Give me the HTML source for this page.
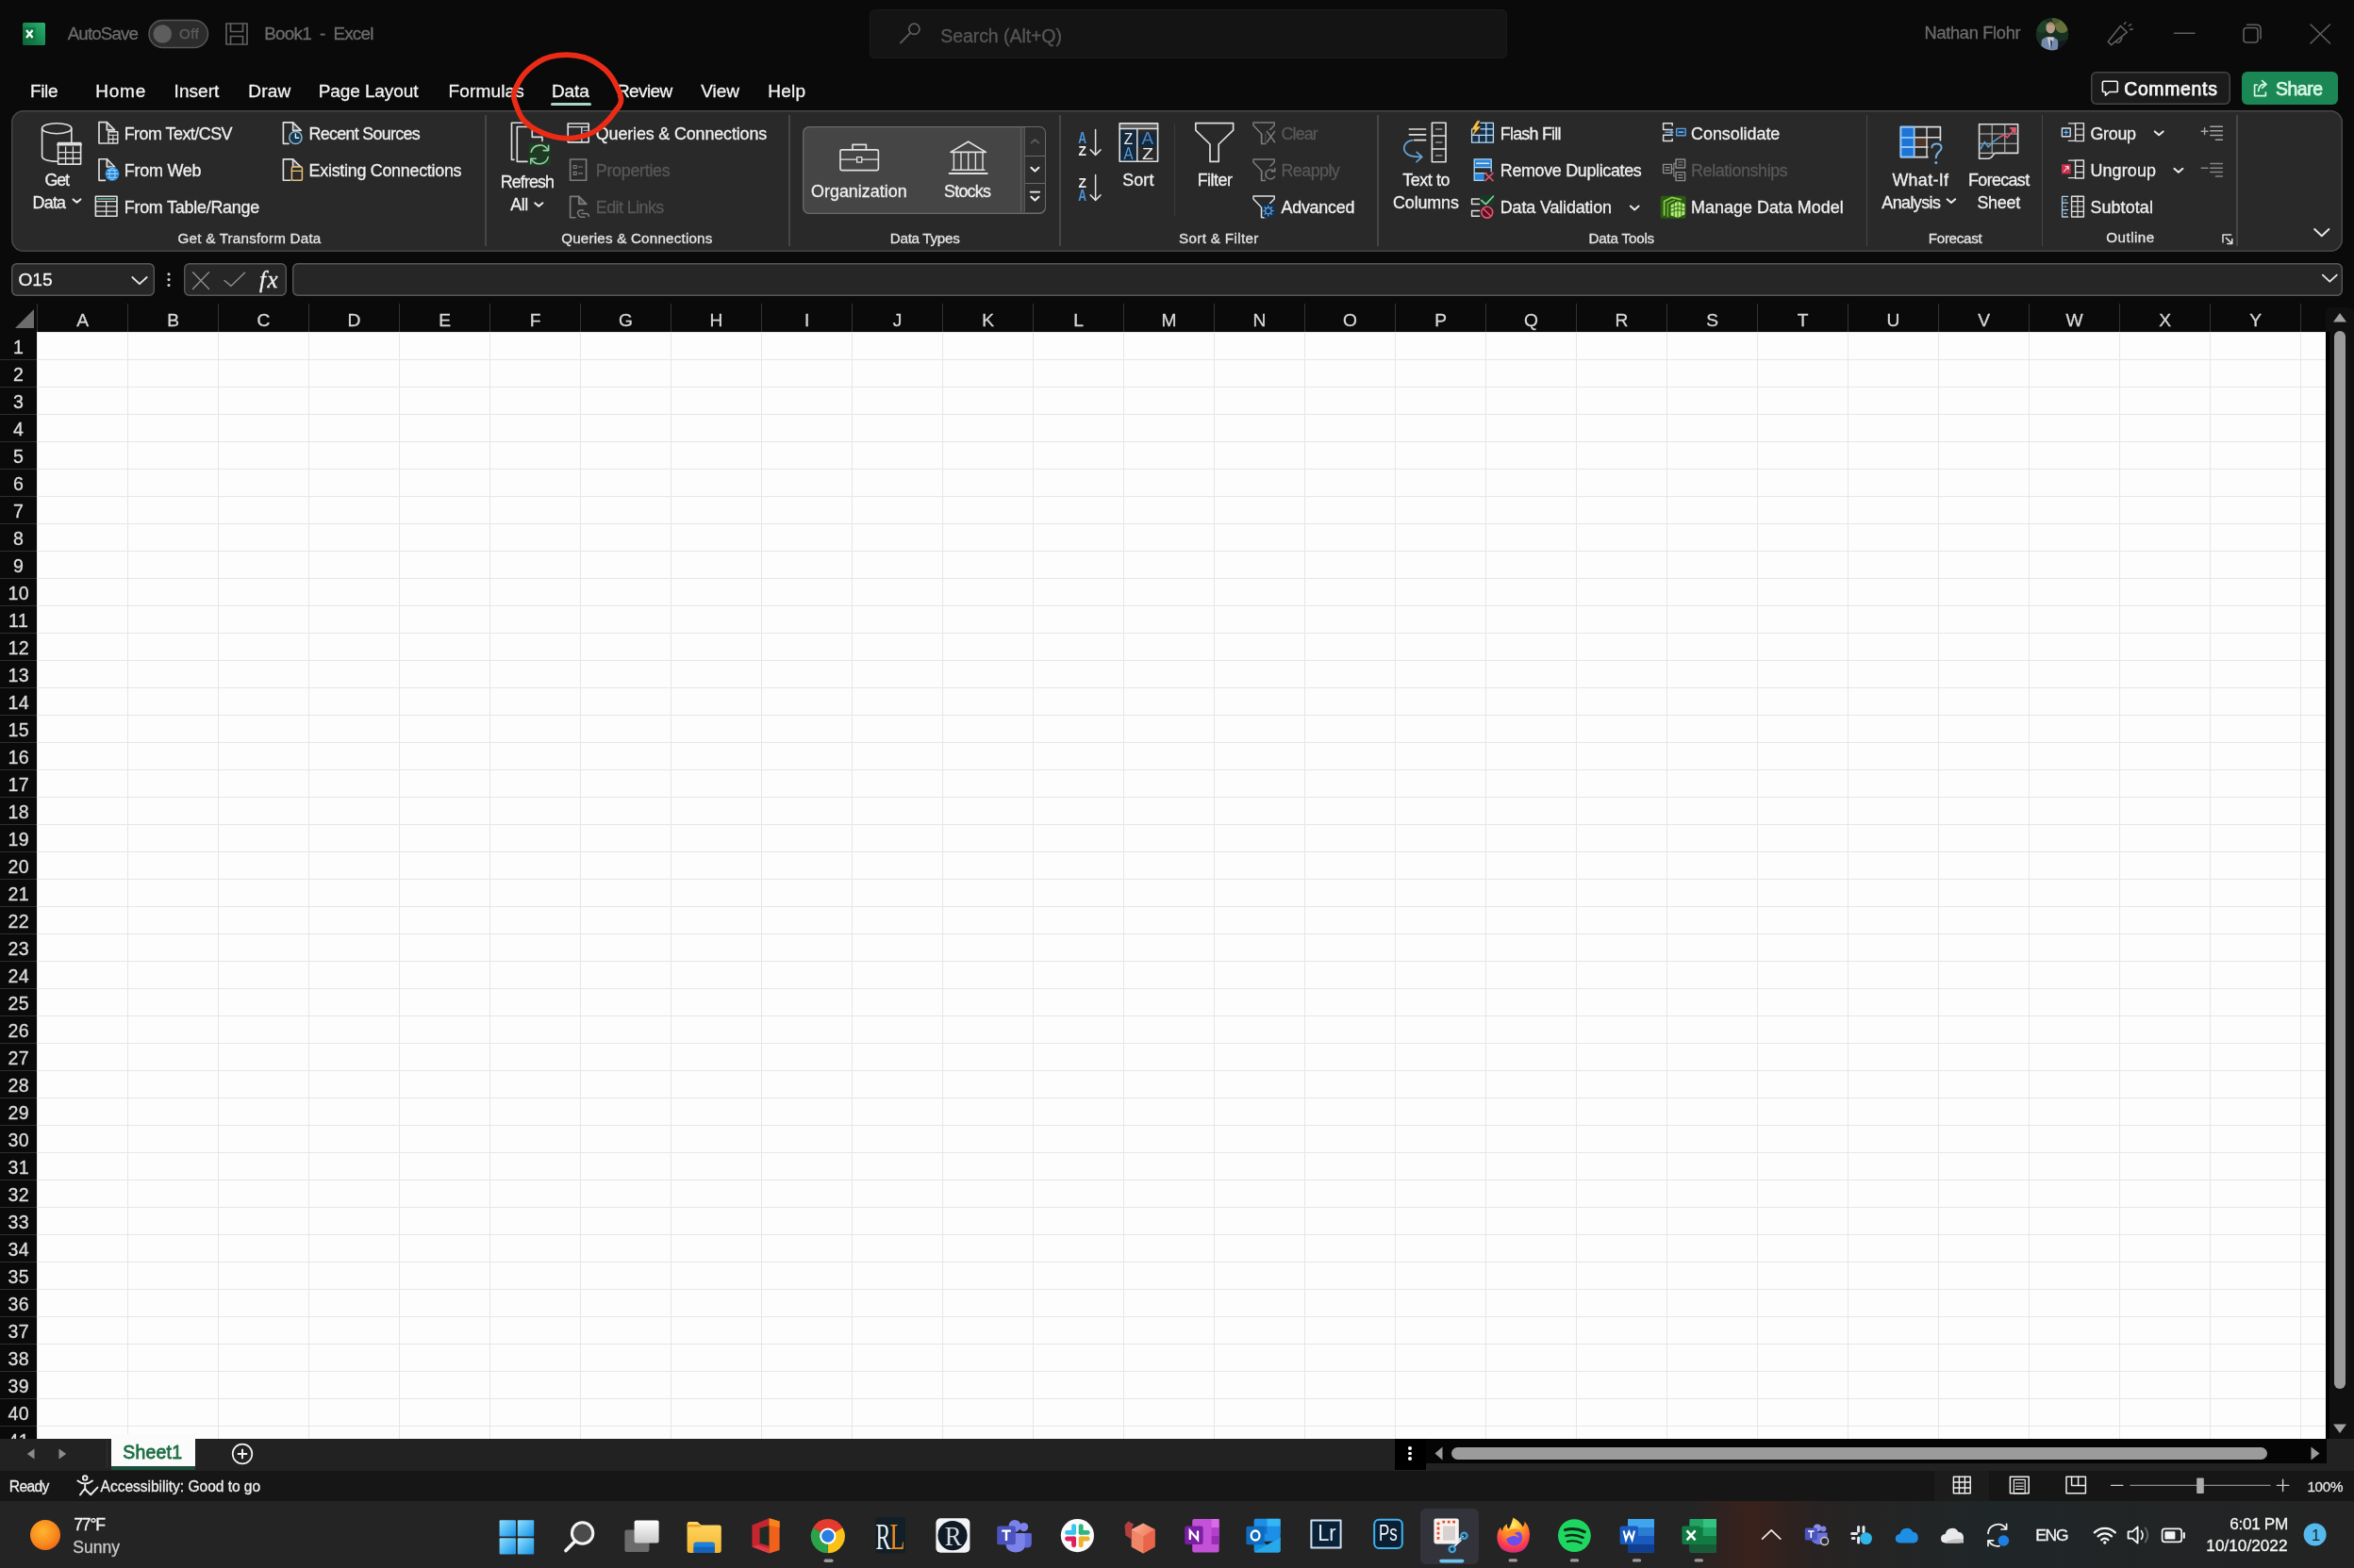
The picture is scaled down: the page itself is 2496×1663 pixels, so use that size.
<!DOCTYPE html><html lang="en"><head><meta charset="utf-8"><title>Book1 - Excel</title><style>html,body{margin:0;padding:0;background:#0a0a0a;}#r{position:relative;width:2496px;height:1663px;overflow:hidden;font-family:"Liberation Sans",sans-serif;will-change:transform;-webkit-font-smoothing:antialiased;}#r>div,#r>span,#r>svg{position:absolute;}#r>span{white-space:pre;line-height:1;-webkit-text-stroke:0.3px;}#r>svg{overflow:visible;}</style></head><body><div id="r">
<div style="left:0px;top:0px;width:2496px;height:352px;background:#0a0a0a;"></div>
<div style="left:922px;top:10px;width:676px;height:52px;background:#141414;border-radius:6px;box-shadow:inset 0 0 0 1px #1b1b1b;"></div>
<div style="left:12px;top:117px;width:2472px;height:150px;background:#292929;border-radius:13px;box-shadow:inset 0 0 0 1.5px #474747;"></div>
<div style="left:12px;top:279px;width:152px;height:35px;background:#262626;border-radius:6px;box-shadow:inset 0 0 0 1.4px #575757;"></div>
<div style="left:195px;top:279px;width:108.5px;height:35px;background:#262626;border-radius:6px;box-shadow:inset 0 0 0 1.4px #575757;"></div>
<div style="left:310px;top:279px;width:2174px;height:35px;background:#262626;border-radius:6px;box-shadow:inset 0 0 0 1.4px #575757;"></div>
<div style="left:39px;top:352px;width:2427px;height:1174px;background-color:#fdfdfd;background-image:linear-gradient(to right,transparent 95px,#e7e7e7 95px),linear-gradient(to bottom,transparent 28px,#e7e7e7 28px);background-size:96px 29px;background-position:1px 1px;"></div>
<div style="left:0px;top:352px;width:39px;height:1174px;background:#0a0a0a;"></div>
<div style="left:39px;top:322px;width:1px;height:30px;background:#333;"></div>
<div style="left:135px;top:322px;width:1px;height:30px;background:#333;"></div>
<div style="left:231px;top:322px;width:1px;height:30px;background:#333;"></div>
<div style="left:327px;top:322px;width:1px;height:30px;background:#333;"></div>
<div style="left:423px;top:322px;width:1px;height:30px;background:#333;"></div>
<div style="left:519px;top:322px;width:1px;height:30px;background:#333;"></div>
<div style="left:615px;top:322px;width:1px;height:30px;background:#333;"></div>
<div style="left:711px;top:322px;width:1px;height:30px;background:#333;"></div>
<div style="left:807px;top:322px;width:1px;height:30px;background:#333;"></div>
<div style="left:903px;top:322px;width:1px;height:30px;background:#333;"></div>
<div style="left:999px;top:322px;width:1px;height:30px;background:#333;"></div>
<div style="left:1095px;top:322px;width:1px;height:30px;background:#333;"></div>
<div style="left:1191px;top:322px;width:1px;height:30px;background:#333;"></div>
<div style="left:1287px;top:322px;width:1px;height:30px;background:#333;"></div>
<div style="left:1383px;top:322px;width:1px;height:30px;background:#333;"></div>
<div style="left:1479px;top:322px;width:1px;height:30px;background:#333;"></div>
<div style="left:1575px;top:322px;width:1px;height:30px;background:#333;"></div>
<div style="left:1671px;top:322px;width:1px;height:30px;background:#333;"></div>
<div style="left:1767px;top:322px;width:1px;height:30px;background:#333;"></div>
<div style="left:1863px;top:322px;width:1px;height:30px;background:#333;"></div>
<div style="left:1959px;top:322px;width:1px;height:30px;background:#333;"></div>
<div style="left:2055px;top:322px;width:1px;height:30px;background:#333;"></div>
<div style="left:2151px;top:322px;width:1px;height:30px;background:#333;"></div>
<div style="left:2247px;top:322px;width:1px;height:30px;background:#333;"></div>
<div style="left:2343px;top:322px;width:1px;height:30px;background:#333;"></div>
<div style="left:2439px;top:322px;width:1px;height:30px;background:#333;"></div>
<div style="left:0px;top:381px;width:39px;height:1px;background:#2e2e2e;"></div>
<div style="left:0px;top:410px;width:39px;height:1px;background:#2e2e2e;"></div>
<div style="left:0px;top:439px;width:39px;height:1px;background:#2e2e2e;"></div>
<div style="left:0px;top:468px;width:39px;height:1px;background:#2e2e2e;"></div>
<div style="left:0px;top:497px;width:39px;height:1px;background:#2e2e2e;"></div>
<div style="left:0px;top:526px;width:39px;height:1px;background:#2e2e2e;"></div>
<div style="left:0px;top:555px;width:39px;height:1px;background:#2e2e2e;"></div>
<div style="left:0px;top:584px;width:39px;height:1px;background:#2e2e2e;"></div>
<div style="left:0px;top:613px;width:39px;height:1px;background:#2e2e2e;"></div>
<div style="left:0px;top:642px;width:39px;height:1px;background:#2e2e2e;"></div>
<div style="left:0px;top:671px;width:39px;height:1px;background:#2e2e2e;"></div>
<div style="left:0px;top:700px;width:39px;height:1px;background:#2e2e2e;"></div>
<div style="left:0px;top:729px;width:39px;height:1px;background:#2e2e2e;"></div>
<div style="left:0px;top:758px;width:39px;height:1px;background:#2e2e2e;"></div>
<div style="left:0px;top:787px;width:39px;height:1px;background:#2e2e2e;"></div>
<div style="left:0px;top:816px;width:39px;height:1px;background:#2e2e2e;"></div>
<div style="left:0px;top:845px;width:39px;height:1px;background:#2e2e2e;"></div>
<div style="left:0px;top:874px;width:39px;height:1px;background:#2e2e2e;"></div>
<div style="left:0px;top:903px;width:39px;height:1px;background:#2e2e2e;"></div>
<div style="left:0px;top:932px;width:39px;height:1px;background:#2e2e2e;"></div>
<div style="left:0px;top:961px;width:39px;height:1px;background:#2e2e2e;"></div>
<div style="left:0px;top:990px;width:39px;height:1px;background:#2e2e2e;"></div>
<div style="left:0px;top:1019px;width:39px;height:1px;background:#2e2e2e;"></div>
<div style="left:0px;top:1048px;width:39px;height:1px;background:#2e2e2e;"></div>
<div style="left:0px;top:1077px;width:39px;height:1px;background:#2e2e2e;"></div>
<div style="left:0px;top:1106px;width:39px;height:1px;background:#2e2e2e;"></div>
<div style="left:0px;top:1135px;width:39px;height:1px;background:#2e2e2e;"></div>
<div style="left:0px;top:1164px;width:39px;height:1px;background:#2e2e2e;"></div>
<div style="left:0px;top:1193px;width:39px;height:1px;background:#2e2e2e;"></div>
<div style="left:0px;top:1222px;width:39px;height:1px;background:#2e2e2e;"></div>
<div style="left:0px;top:1251px;width:39px;height:1px;background:#2e2e2e;"></div>
<div style="left:0px;top:1280px;width:39px;height:1px;background:#2e2e2e;"></div>
<div style="left:0px;top:1309px;width:39px;height:1px;background:#2e2e2e;"></div>
<div style="left:0px;top:1338px;width:39px;height:1px;background:#2e2e2e;"></div>
<div style="left:0px;top:1367px;width:39px;height:1px;background:#2e2e2e;"></div>
<div style="left:0px;top:1396px;width:39px;height:1px;background:#2e2e2e;"></div>
<div style="left:0px;top:1425px;width:39px;height:1px;background:#2e2e2e;"></div>
<div style="left:0px;top:1454px;width:39px;height:1px;background:#2e2e2e;"></div>
<div style="left:0px;top:1483px;width:39px;height:1px;background:#2e2e2e;"></div>
<div style="left:0px;top:1512px;width:39px;height:1px;background:#2e2e2e;"></div>
<svg style="left:15px;top:327px;" width="22" height="22" viewBox="0 0 22 22"><path d="M21 1V21H1Z" fill="#6d6d6d"/></svg>
<span style="left:81.2px;top:329.6px;font-size:19.2px;color:#d8d8d8;">A</span>
<span style="left:177.2px;top:329.6px;font-size:19.2px;color:#d8d8d8;">B</span>
<span style="left:272.6px;top:329.6px;font-size:19.2px;color:#d8d8d8;">C</span>
<span style="left:368.6px;top:329.6px;font-size:19.2px;color:#d8d8d8;">D</span>
<span style="left:465.2px;top:329.6px;font-size:19.2px;color:#d8d8d8;">E</span>
<span style="left:561.7px;top:329.6px;font-size:19.2px;color:#d8d8d8;">F</span>
<span style="left:656.1px;top:329.6px;font-size:19.2px;color:#d8d8d8;">G</span>
<span style="left:752.6px;top:329.6px;font-size:19.2px;color:#d8d8d8;">H</span>
<span style="left:852.9px;top:329.6px;font-size:19.2px;color:#d8d8d8;">I</span>
<span style="left:946.8px;top:329.6px;font-size:19.2px;color:#d8d8d8;">J</span>
<span style="left:1041.2px;top:329.6px;font-size:19.2px;color:#d8d8d8;">K</span>
<span style="left:1138.2px;top:329.6px;font-size:19.2px;color:#d8d8d8;">L</span>
<span style="left:1231.6px;top:329.6px;font-size:19.2px;color:#d8d8d8;">M</span>
<span style="left:1328.6px;top:329.6px;font-size:19.2px;color:#d8d8d8;">N</span>
<span style="left:1424.1px;top:329.6px;font-size:19.2px;color:#d8d8d8;">O</span>
<span style="left:1521.2px;top:329.6px;font-size:19.2px;color:#d8d8d8;">P</span>
<span style="left:1616.1px;top:329.6px;font-size:19.2px;color:#d8d8d8;">Q</span>
<span style="left:1712.6px;top:329.6px;font-size:19.2px;color:#d8d8d8;">R</span>
<span style="left:1809.2px;top:329.6px;font-size:19.2px;color:#d8d8d8;">S</span>
<span style="left:1905.7px;top:329.6px;font-size:19.2px;color:#d8d8d8;">T</span>
<span style="left:2000.6px;top:329.6px;font-size:19.2px;color:#d8d8d8;">U</span>
<span style="left:2097.2px;top:329.6px;font-size:19.2px;color:#d8d8d8;">V</span>
<span style="left:2190.5px;top:329.6px;font-size:19.2px;color:#d8d8d8;">W</span>
<span style="left:2289.2px;top:329.6px;font-size:19.2px;color:#d8d8d8;">X</span>
<span style="left:2385.2px;top:329.6px;font-size:19.2px;color:#d8d8d8;">Y</span>
<span style="left:14.1px;top:359.0px;font-size:19.6px;color:#dedede;">1</span>
<span style="left:14.1px;top:388.0px;font-size:19.6px;color:#dedede;">2</span>
<span style="left:14.1px;top:417.0px;font-size:19.6px;color:#dedede;">3</span>
<span style="left:14.1px;top:446.0px;font-size:19.6px;color:#dedede;">4</span>
<span style="left:14.1px;top:475.0px;font-size:19.6px;color:#dedede;">5</span>
<span style="left:14.1px;top:504.0px;font-size:19.6px;color:#dedede;">6</span>
<span style="left:14.1px;top:533.0px;font-size:19.6px;color:#dedede;">7</span>
<span style="left:14.1px;top:562.0px;font-size:19.6px;color:#dedede;">8</span>
<span style="left:14.1px;top:591.0px;font-size:19.6px;color:#dedede;">9</span>
<span style="left:8.4px;top:620.0px;font-size:19.6px;color:#dedede;letter-spacing:0.50px;">10</span>
<span style="left:9.1px;top:649.0px;font-size:19.6px;color:#dedede;letter-spacing:0.50px;">11</span>
<span style="left:8.4px;top:678.0px;font-size:19.6px;color:#dedede;letter-spacing:0.50px;">12</span>
<span style="left:8.4px;top:707.0px;font-size:19.6px;color:#dedede;letter-spacing:0.50px;">13</span>
<span style="left:8.4px;top:736.0px;font-size:19.6px;color:#dedede;letter-spacing:0.50px;">14</span>
<span style="left:8.4px;top:765.0px;font-size:19.6px;color:#dedede;letter-spacing:0.50px;">15</span>
<span style="left:8.4px;top:794.0px;font-size:19.6px;color:#dedede;letter-spacing:0.50px;">16</span>
<span style="left:8.4px;top:823.0px;font-size:19.6px;color:#dedede;letter-spacing:0.50px;">17</span>
<span style="left:8.4px;top:852.0px;font-size:19.6px;color:#dedede;letter-spacing:0.50px;">18</span>
<span style="left:8.4px;top:881.0px;font-size:19.6px;color:#dedede;letter-spacing:0.50px;">19</span>
<span style="left:8.4px;top:910.0px;font-size:19.6px;color:#dedede;letter-spacing:0.50px;">20</span>
<span style="left:8.4px;top:939.0px;font-size:19.6px;color:#dedede;letter-spacing:0.50px;">21</span>
<span style="left:8.4px;top:968.0px;font-size:19.6px;color:#dedede;letter-spacing:0.50px;">22</span>
<span style="left:8.4px;top:997.0px;font-size:19.6px;color:#dedede;letter-spacing:0.50px;">23</span>
<span style="left:8.4px;top:1026.0px;font-size:19.6px;color:#dedede;letter-spacing:0.50px;">24</span>
<span style="left:8.4px;top:1055.0px;font-size:19.6px;color:#dedede;letter-spacing:0.50px;">25</span>
<span style="left:8.4px;top:1084.0px;font-size:19.6px;color:#dedede;letter-spacing:0.50px;">26</span>
<span style="left:8.4px;top:1113.0px;font-size:19.6px;color:#dedede;letter-spacing:0.50px;">27</span>
<span style="left:8.4px;top:1142.0px;font-size:19.6px;color:#dedede;letter-spacing:0.50px;">28</span>
<span style="left:8.4px;top:1171.0px;font-size:19.6px;color:#dedede;letter-spacing:0.50px;">29</span>
<span style="left:8.4px;top:1200.0px;font-size:19.6px;color:#dedede;letter-spacing:0.50px;">30</span>
<span style="left:8.4px;top:1229.0px;font-size:19.6px;color:#dedede;letter-spacing:0.50px;">31</span>
<span style="left:8.4px;top:1258.0px;font-size:19.6px;color:#dedede;letter-spacing:0.50px;">32</span>
<span style="left:8.4px;top:1287.0px;font-size:19.6px;color:#dedede;letter-spacing:0.50px;">33</span>
<span style="left:8.4px;top:1316.0px;font-size:19.6px;color:#dedede;letter-spacing:0.50px;">34</span>
<span style="left:8.4px;top:1345.0px;font-size:19.6px;color:#dedede;letter-spacing:0.50px;">35</span>
<span style="left:8.4px;top:1374.0px;font-size:19.6px;color:#dedede;letter-spacing:0.50px;">36</span>
<span style="left:8.4px;top:1403.0px;font-size:19.6px;color:#dedede;letter-spacing:0.50px;">37</span>
<span style="left:8.4px;top:1432.0px;font-size:19.6px;color:#dedede;letter-spacing:0.50px;">38</span>
<span style="left:8.4px;top:1461.0px;font-size:19.6px;color:#dedede;letter-spacing:0.50px;">39</span>
<span style="left:8.4px;top:1490.0px;font-size:19.6px;color:#dedede;letter-spacing:0.50px;">40</span>
<span style="left:8.4px;top:1519.0px;font-size:19.6px;color:#dedede;letter-spacing:0.50px;">41</span>
<div style="left:2466px;top:326px;width:30px;height:1201px;background:#101010;border-radius:6px 6px 0 8px;"></div>
<div style="left:2466px;top:352px;width:4px;height:1174px;background:#000;"></div>
<div style="left:2475px;top:351px;width:12px;height:1122px;background:#9b9b9b;border-radius:6px;"></div>
<svg style="left:2473px;top:1509px;" width="16" height="12" viewBox="0 0 16 12"><path d="M1 1.5H15L8 11Z" fill="#a0a0a0"/></svg>
<svg style="left:2473px;top:331px;" width="16" height="12" viewBox="0 0 16 12"><path d="M1 10.5H15L8 1Z" fill="#a0a0a0"/></svg>
<div style="left:0px;top:1526px;width:2496px;height:34px;background:#222;"></div>
<div style="left:2466px;top:1527px;width:30px;height:33px;background:#222;"></div>
<div style="left:1479px;top:1526px;width:988px;height:26px;background:#050505;"></div>
<div style="left:1479px;top:1526px;width:33px;height:33px;background:#000;"></div>
<div style="left:1539px;top:1535px;width:865px;height:13px;background:#9b9b9b;border-radius:6.5px;"></div>
<svg style="left:1521px;top:1534px;" width="9" height="15" viewBox="0 0 9 15"><path d="M8.5 0.5V14.5L0.5 7.5Z" fill="#9b9b9b"/></svg>
<svg style="left:2450px;top:1534px;" width="10" height="15" viewBox="0 0 10 15"><path d="M0.5 0.5V14.5L9.5 7.5Z" fill="#9b9b9b"/></svg>
<div style="left:1493.4px;top:1533.8px;width:3.8px;height:3.8px;background:#fff;border-radius:50%;"></div>
<div style="left:1493.4px;top:1539.5px;width:3.8px;height:3.8px;background:#fff;border-radius:50%;"></div>
<div style="left:1493.4px;top:1545.3px;width:3.8px;height:3.8px;background:#fff;border-radius:50%;"></div>
<div style="left:113px;top:1528px;width:1px;height:29px;background:#333;"></div>
<div style="left:118px;top:1521px;width:89px;height:34px;background:#fbfbfb;"></div>
<div style="left:118px;top:1555px;width:89px;height:3.5px;background:#1c4f39;"></div>
<span style="left:130.2px;top:1530.8px;font-size:19.4px;color:#1e7044;letter-spacing:0.26px;-webkit-text-stroke:0.8px #1e7044;">Sheet1</span>
<svg style="left:28px;top:1536px;" width="9" height="12" viewBox="0 0 9 12"><path d="M8.5 0.5V11.5L0.8 6Z" fill="#8c8c8c"/></svg>
<svg style="left:61.5px;top:1536px;" width="9" height="12" viewBox="0 0 9 12"><path d="M0.5 0.5V11.5L8.2 6Z" fill="#8c8c8c"/></svg>
<svg style="left:245px;top:1530px;" width="24" height="24" viewBox="0 0 24 24"><circle cx="12" cy="12" r="10.3" fill="none" stroke="#f2f2f2" stroke-width="1.7"/><path d="M12 6.8V17.2M6.8 12H17.2" stroke="#f2f2f2" stroke-width="2" fill="none"/></svg>
<div style="left:0px;top:1559.5px;width:2496px;height:32.5px;background:#161616;"></div>
<div style="left:2051px;top:1559.5px;width:58px;height:32.5px;background:#1c1c1c;"></div>
<span style="left:9.8px;top:1569.4px;font-size:15.6px;color:#efefef;letter-spacing:-0.65px;">Ready</span>
<span style="left:106.6px;top:1569.4px;font-size:15.6px;color:#efefef;letter-spacing:-0.05px;">Accessibility: Good to go</span>
<span style="left:2446.4px;top:1568.9px;font-size:15.2px;color:#e6e6e6;letter-spacing:-0.26px;">100%</span>
<div style="left:0;top:1592px;width:2496px;height:71px;background:linear-gradient(to right,#242424 0,#242424 1795px,#3a211b 1855px,#272322 1925px,#1f2628 2110px,#222425 2300px,#232323 2496px);"></div>
<div style="left:1506px;top:1600px;width:62px;height:59px;background:#33343b;border-radius:6px;"></div>
<span style="left:78.2px;top:1608.7px;font-size:17.6px;color:#f4f4f4;letter-spacing:-1.15px;">77°F</span>
<span style="left:77.3px;top:1632.5px;font-size:17.6px;color:#c9c9c9;letter-spacing:-0.03px;">Sunny</span>
<span style="left:2158.2px;top:1620.0px;font-size:17.4px;color:#f4f4f4;letter-spacing:-1.20px;">ENG</span>
<span style="left:2364.2px;top:1607.9px;font-size:17.2px;color:#f4f4f4;letter-spacing:-0.31px;">6:01 PM</span>
<span style="left:2339.3px;top:1631.4px;font-size:17.2px;color:#f4f4f4;letter-spacing:0.02px;">10/10/2022</span>
<span style="left:71.7px;top:26.7px;font-size:18.8px;color:#6c6c6c;letter-spacing:-0.89px;">AutoSave</span>
<span style="left:280.3px;top:26.7px;font-size:18.8px;color:#6c6c6c;letter-spacing:-0.73px;">Book1  -  Excel</span>
<span style="left:997.2px;top:28.8px;font-size:19.6px;color:#565656;letter-spacing:-0.10px;">Search (Alt+Q)</span>
<span style="left:2040.6px;top:26.0px;font-size:18.2px;color:#6c6c6c;letter-spacing:-0.29px;">Nathan Flohr</span>
<span style="left:32.0px;top:87.4px;font-size:19.0px;color:#f3f3f3;letter-spacing:-0.37px;">File</span>
<span style="left:101.2px;top:87.4px;font-size:19.0px;color:#f3f3f3;letter-spacing:0.81px;">Home</span>
<span style="left:184.6px;top:87.4px;font-size:19.0px;color:#f3f3f3;letter-spacing:0.04px;">Insert</span>
<span style="left:263.2px;top:87.4px;font-size:19.0px;color:#f3f3f3;letter-spacing:0.25px;">Draw</span>
<span style="left:337.7px;top:87.4px;font-size:19.0px;color:#f3f3f3;letter-spacing:-0.09px;">Page Layout</span>
<span style="left:475.6px;top:87.4px;font-size:19.0px;color:#f3f3f3;letter-spacing:0.13px;">Formulas</span>
<span style="left:584.9px;top:87.4px;font-size:19.0px;color:#f3f3f3;letter-spacing:-0.04px;">Data</span>
<span style="left:654.0px;top:87.4px;font-size:19.0px;color:#f3f3f3;letter-spacing:-0.60px;">Review</span>
<span style="left:743.2px;top:87.4px;font-size:19.0px;color:#f3f3f3;letter-spacing:-0.01px;">View</span>
<span style="left:814.2px;top:87.4px;font-size:19.0px;color:#f3f3f3;letter-spacing:0.24px;">Help</span>
<div style="left:584px;top:108.5px;width:42.5px;height:3.5px;background:#a7d5c6;border-radius:1.5px;"></div>
<div style="left:2216.5px;top:76px;width:148.5px;height:35px;background:#1b1b1b;border-radius:6px;box-shadow:inset 0 0 0 1.5px #454545;"></div>
<div style="left:2377px;top:76px;width:101.5px;height:35px;background:#1b8755;border-radius:6px;"></div>
<span style="left:2252.2px;top:85.2px;font-size:19.4px;color:#f6f6f6;letter-spacing:0.70px;-webkit-text-stroke:0.75px #f6f6f6;">Comments</span>
<span style="left:2413.0px;top:85.2px;font-size:19.4px;color:#d6f6e4;letter-spacing:-0.44px;-webkit-text-stroke:0.75px #d6f6e4;">Share</span>
<div style="left:514.2px;top:122px;width:1.6px;height:139px;background:#464646;"></div>
<div style="left:836.2px;top:122px;width:1.6px;height:139px;background:#464646;"></div>
<div style="left:1123.2px;top:122px;width:1.6px;height:139px;background:#464646;"></div>
<div style="left:1460.2px;top:122px;width:1.6px;height:139px;background:#464646;"></div>
<div style="left:1978.9px;top:122px;width:1.6px;height:139px;background:#464646;"></div>
<div style="left:2164.8999999999996px;top:122px;width:1.6px;height:139px;background:#464646;"></div>
<div style="left:2371.2px;top:122px;width:1.6px;height:139px;background:#464646;"></div>
<div style="left:1244.5px;top:131px;width:1px;height:98px;background:#3a3a3a;"></div>
<div style="left:851px;top:134px;width:258px;height:92.5px;background:#454545;border-radius:7px;box-shadow:inset 0 0 0 1.3px #6a6a6a;"></div>
<div style="left:1087px;top:135.3px;width:20.7px;height:90px;background:#2d2d2d;border-radius:0 6px 6px 0;"></div>
<div style="left:1082px;top:135.3px;width:1.2px;height:90px;background:#606060;"></div>
<div style="left:1086px;top:135.3px;width:1px;height:90px;background:#5a5a5a;"></div>
<div style="left:1087px;top:165px;width:21px;height:1.3px;background:#6a6a6a;"></div>
<div style="left:1087px;top:194px;width:21px;height:1.3px;background:#6a6a6a;"></div>
<span style="left:47.6px;top:182.6px;font-size:17.9px;color:#f0f0f0;letter-spacing:-1.20px;">Get</span>
<span style="left:34.5px;top:206.5px;font-size:17.9px;color:#f0f0f0;letter-spacing:-0.74px;">Data</span>
<span style="left:131.7px;top:133.8px;font-size:17.9px;color:#f0f0f0;letter-spacing:-0.51px;">From Text/CSV</span>
<span style="left:131.7px;top:172.8px;font-size:17.9px;color:#f0f0f0;letter-spacing:-0.20px;">From Web</span>
<span style="left:131.7px;top:211.8px;font-size:17.9px;color:#f0f0f0;letter-spacing:-0.22px;">From Table/Range</span>
<span style="left:327.6px;top:133.8px;font-size:17.9px;color:#f0f0f0;letter-spacing:-0.71px;">Recent Sources</span>
<span style="left:327.6px;top:172.8px;font-size:17.9px;color:#f0f0f0;letter-spacing:-0.27px;">Existing Connections</span>
<span style="left:530.8px;top:185.1px;font-size:17.9px;color:#f0f0f0;letter-spacing:-0.91px;">Refresh</span>
<span style="left:541.3px;top:209.2px;font-size:17.9px;color:#f0f0f0;letter-spacing:-0.45px;">All</span>
<span style="left:631.8px;top:133.8px;font-size:17.9px;color:#f0f0f0;letter-spacing:-0.13px;">Queries &amp; Connections</span>
<span style="left:631.8px;top:172.8px;font-size:17.9px;color:#585858;letter-spacing:-0.29px;">Properties</span>
<span style="left:631.8px;top:211.8px;font-size:17.9px;color:#585858;letter-spacing:-0.57px;">Edit Links</span>
<span style="left:860.0px;top:195.2px;font-size:17.9px;color:#f0f0f0;letter-spacing:0.02px;">Organization</span>
<span style="left:1001.1px;top:195.2px;font-size:17.9px;color:#f0f0f0;letter-spacing:-0.78px;">Stocks</span>
<span style="left:1190.2px;top:182.8px;font-size:17.9px;color:#f0f0f0;letter-spacing:0.12px;">Sort</span>
<span style="left:1269.7px;top:182.8px;font-size:17.9px;color:#f0f0f0;letter-spacing:-0.51px;">Filter</span>
<span style="left:1358.5px;top:133.8px;font-size:17.9px;color:#585858;letter-spacing:-0.87px;">Clear</span>
<span style="left:1358.5px;top:172.8px;font-size:17.9px;color:#585858;letter-spacing:-0.56px;">Reapply</span>
<span style="left:1358.5px;top:211.8px;font-size:17.9px;color:#f0f0f0;letter-spacing:-0.24px;">Advanced</span>
<span style="left:1487.2px;top:182.8px;font-size:17.9px;color:#f0f0f0;letter-spacing:-0.40px;">Text to</span>
<span style="left:1477.0px;top:206.6px;font-size:17.9px;color:#f0f0f0;letter-spacing:-0.12px;">Columns</span>
<span style="left:1590.8px;top:133.8px;font-size:17.9px;color:#f0f0f0;letter-spacing:-0.76px;">Flash Fill</span>
<span style="left:1590.8px;top:172.8px;font-size:17.9px;color:#f0f0f0;letter-spacing:-0.32px;">Remove Duplicates</span>
<span style="left:1590.8px;top:211.8px;font-size:17.9px;color:#f0f0f0;letter-spacing:-0.13px;">Data Validation</span>
<span style="left:1793.1px;top:133.8px;font-size:17.9px;color:#f0f0f0;letter-spacing:-0.03px;">Consolidate</span>
<span style="left:1793.1px;top:172.8px;font-size:17.9px;color:#585858;letter-spacing:-0.40px;">Relationships</span>
<span style="left:1793.1px;top:211.8px;font-size:17.9px;color:#f0f0f0;letter-spacing:0.03px;">Manage Data Model</span>
<span style="left:2006.4px;top:182.8px;font-size:17.9px;color:#f0f0f0;letter-spacing:0.32px;">What-If</span>
<span style="left:1995.3px;top:206.6px;font-size:17.9px;color:#f0f0f0;letter-spacing:-0.58px;">Analysis</span>
<span style="left:2087.1px;top:182.8px;font-size:17.9px;color:#f0f0f0;letter-spacing:-0.65px;">Forecast</span>
<span style="left:2096.4px;top:206.6px;font-size:17.9px;color:#f0f0f0;letter-spacing:-0.24px;">Sheet</span>
<span style="left:2216.4px;top:133.8px;font-size:17.9px;color:#f0f0f0;letter-spacing:-0.26px;">Group</span>
<span style="left:2216.4px;top:172.8px;font-size:17.9px;color:#f0f0f0;letter-spacing:0.16px;">Ungroup</span>
<span style="left:2216.4px;top:211.8px;font-size:17.9px;color:#f0f0f0;letter-spacing:0.12px;">Subtotal</span>
<span style="left:188.6px;top:244.5px;font-size:15.2px;color:#e4e4e4;letter-spacing:0.21px;">Get &amp; Transform Data</span>
<span style="left:595.2px;top:244.5px;font-size:15.2px;color:#e4e4e4;letter-spacing:0.20px;">Queries &amp; Connections</span>
<span style="left:943.8px;top:244.5px;font-size:15.2px;color:#e4e4e4;letter-spacing:-0.29px;">Data Types</span>
<span style="left:1250.0px;top:244.5px;font-size:15.2px;color:#e4e4e4;letter-spacing:0.35px;">Sort &amp; Filter</span>
<span style="left:1684.5px;top:244.5px;font-size:15.2px;color:#e4e4e4;letter-spacing:-0.20px;">Data Tools</span>
<span style="left:2044.8px;top:244.5px;font-size:15.2px;color:#e4e4e4;letter-spacing:-0.32px;">Forecast</span>
<span style="left:2233.3px;top:243.6px;font-size:15.2px;color:#e4e4e4;letter-spacing:0.47px;">Outline</span>
<span style="left:19.5px;top:287.1px;font-size:19.2px;color:#f4f4f4;letter-spacing:-0.09px;">O15</span>
<span style="left:275.0px;top:283.6px;font-size:25px;color:#f0f0f0;letter-spacing:1.50px;font-style:italic;font-family:'Liberation Serif',serif;">fx</span>
<svg style="left:0;top:0px" width="2496" height="117" viewBox="0 0 2496 117" fill="none" stroke-linecap="round" stroke-linejoin="round"><defs><linearGradient id="xg" x1="0" y1="1" x2="1" y2="0"><stop offset="0" stop-color="#0d6234"/><stop offset="0.5" stop-color="#188a50"/><stop offset="1" stop-color="#2fb374"/></linearGradient></defs><rect x="24" y="24" width="24" height="24" rx="1.5" fill="url(#xg)"/><rect x="24" y="29" width="13.5" height="14" fill="#0f6d3b" opacity=".75"/><path d="M28 32L34.6 40M34.6 32L28 40" stroke="#f1fff6" stroke-width="2.3" stroke-linecap="butt"/><rect x="158" y="21.5" width="62.5" height="29" rx="14.5" fill="#2c2c2c" stroke="#565656" stroke-width="1.5"/><circle cx="172.3" cy="36" r="9.8" fill="#5d5d5d"/><g stroke="#5f5f5f" stroke-width="1.7" stroke-linejoin="miter"><path d="M240 25H262V47H240Z"/><path d="M244.5 25V33.5H257.5V25"/><path d="M244.5 47V38.5H257.5V47"/></g><circle cx="969.4" cy="30.8" r="5.6" stroke="#5e5e5e" stroke-width="1.7"/><path d="M965.3 34.9L954.8 45.6" stroke="#5e5e5e" stroke-width="1.9"/><defs><clipPath id="av"><circle cx="2176" cy="36.2" r="17.2"/></clipPath></defs><g clip-path="url(#av)" opacity=".82"><rect x="2158" y="18" width="36" height="37" fill="#1d3a25"/><circle cx="2186.5" cy="27.5" r="7.5" fill="#7c8a45"/><circle cx="2180" cy="21" r="4" fill="#59703a"/><circle cx="2165" cy="28" r="7" fill="#23502f"/><path d="M2163.5 56L2165 42Q2173 35.4 2181.6 42L2184 56Z" fill="#8ea6cf"/><path d="M2170.6 39.6L2174.6 56L2178 39.6Z" fill="#f2f4f8"/><path d="M2174 42L2174.6 56L2176.6 44Z" fill="#2b4f9a"/><ellipse cx="2174.2" cy="29.6" rx="4.8" ry="6" fill="#e0bfa6"/><path d="M2169 27.6Q2174 19.6 2179.4 27.6Q2174 24.6 2169 27.6Z" fill="#c9a67c"/><path d="M2183 44L2194 42V56H2181Z" fill="#191c28"/></g><g stroke="#5f5f5f" stroke-width="1.6"><path d="M2235.2 44.2L2248.4 27.4L2255.4 34.2L2238.6 47.6Z"/><path d="M2243 44Q2247.4 47.8 2250 40"/><path d="M2252.4 25.4L2254 23.8M2257.2 27.4L2259.6 25.8M2258.8 31.4L2261.2 30.8"/></g><path d="M2305.5 35.2H2327" stroke="#5f5f5f" stroke-width="1.6"/><g stroke="#5f5f5f" stroke-width="1.6"><rect x="2379" y="29.5" width="15" height="15.5" rx="3"/><path d="M2382.5 26.3H2392.5Q2397 26.3 2397 31V41"/></g><path d="M2450 26L2470.5 46M2470.5 26L2450 46" stroke="#5f5f5f" stroke-width="1.6"/><path d="M2230.5 86.3H2244.2Q2245.3 86.3 2245.3 87.4V96.4Q2245.3 97.5 2244.2 97.5H2236.6L2232.5 101.2V97.5H2230.5Q2229.4 97.5 2229.4 96.4V87.4Q2229.4 86.3 2230.5 86.3Z" stroke="#f2f2f2" stroke-width="1.6"/><g stroke="#d6f6e4" stroke-width="1.7"><path d="M2393.5 90H2390.6V101.6H2402.4V98"/><path d="M2394.6 96.6Q2395.5 89.6 2400.6 89.4M2398.6 85.6L2403 89.4L2398.6 93.4"/></g></svg>
<svg style="left:0;top:270px" width="2496" height="50" viewBox="0 270 2496 50" fill="none" stroke-linecap="round" stroke-linejoin="round"><path d="M140.3 294L148 301.2L155.7 294" stroke="#e8e8e8" stroke-width="1.8"/><circle cx="179" cy="290.7" r="1.55" fill="#cfcfcf"/><circle cx="179" cy="296.6" r="1.55" fill="#cfcfcf"/><circle cx="179" cy="302.5" r="1.55" fill="#cfcfcf"/><path d="M204.5 288.8L221.5 306.5M221.5 288.8L204.5 306.5" stroke="#8a8a8a" stroke-width="1.5"/><path d="M238 297.5L245 303.3L259.5 289.3" stroke="#8a8a8a" stroke-width="1.5"/><path d="M2462.8 291.6L2470.3 298.7L2477.8 291.6" stroke="#e8e8e8" stroke-width="1.8"/></svg>
<svg style="left:0;top:117px" width="2496" height="150" viewBox="0 117 2496 150" fill="none" stroke-linecap="round" stroke-linejoin="round"><path d="M44.6 136.2V165.5C44.6 169 51 171 61 171.3" stroke="#dedede" stroke-width="1.65" fill="none" /><path d="M75.8 136.2V151" stroke="#dedede" stroke-width="1.65" fill="none" /><ellipse cx="60.2" cy="136.2" rx="15.6" ry="5.5" stroke="#dedede" stroke-width="1.65"/><rect x="61.6" y="151.5" width="24" height="22.6" fill="#292929" stroke="#dedede" stroke-width="1.65"/><path d="M61.6 153.2H85.6" stroke="#dedede" stroke-width="2.6" fill="none" /><path d="M69.6 156V174M77.4 156V174M61.6 161.6H85.6M61.6 168H85.6" stroke="#dedede" stroke-width="1.3" fill="none" /><path d="M77.6 211.4L81.5 214.75400000000002L85.4 211.4" stroke="#ececec" stroke-width="2.0" fill="none" /><path d="M114 152.0H105V129.6H113.3" stroke="#dedede" stroke-width="1.65" fill="none" /><path d="M113.3 129.6V137.9H121.6Z" stroke="#dedede" stroke-width="1.65" fill="#4a4a4a" /><rect x="115" y="139.8" width="9.8" height="12.2" fill="#292929" stroke="#dedede" stroke-width="1.4"/><path d="M115 143.3H124.8M119.9 143.3V152M115 147.6H124.8" stroke="#dedede" stroke-width="1.1" fill="none" /><path d="M111.5 191.29999999999998H105V168.7H113.3" stroke="#dedede" stroke-width="1.65" fill="none" /><path d="M113.3 168.7V177.0H121.6Z" stroke="#dedede" stroke-width="1.65" fill="#4a4a4a" /><circle cx="119" cy="184.4" r="7.4" fill="#2a86d2"/><g stroke="#8fd0ff" stroke-width="1.1" fill="none"><ellipse cx="119" cy="184.4" rx="3" ry="6.2"/><path d="M112.8 184.4H125.2M114 180.6H124M114 188.2H124"/></g><rect x="101.4" y="208.2" width="22.6" height="21" stroke="#dedede" stroke-width="1.65"/><path d="M101.4 213.7H124M101.4 218.9H124M101.4 224.1H124M112.7 213.7V229.2" stroke="#dedede" stroke-width="1.3" fill="none" /><path d="M104 211H121.5" stroke="#6fb3a4" stroke-width="1.6" fill="none" /><path d="M306 152.4H300.4V129.8H310.59999999999997" stroke="#dedede" stroke-width="1.65" fill="none" /><path d="M310.59999999999997 129.8V138.4H319.2Z" stroke="#dedede" stroke-width="1.65" fill="#4a4a4a" /><circle cx="313.4" cy="146" r="6.6" fill="#17374b" stroke="#86b6cf" stroke-width="1.5"/><path d="M313.4 142V146.3H316.8" stroke="#e8f4ff" stroke-width="1.4" fill="none" /><path d="M308 191.20000000000002H300.4V168.8H310.59999999999997" stroke="#dedede" stroke-width="1.65" fill="none" /><path d="M310.59999999999997 168.8V177.4H319.2Z" stroke="#dedede" stroke-width="1.65" fill="#4a4a4a" /><rect x="309.4" y="177" width="11" height="14.2" rx="1.2" fill="#292929" stroke="#e9c274" stroke-width="1.5"/><path d="M309.4 181.4H320.4" stroke="#e9c274" stroke-width="1.4" fill="none" /><path d="M545 169.4H542.5V130.2H561.3" stroke="#dedede" stroke-width="1.65" fill="none" /><path d="M559 171.4H548.3V134.5H564.3V145.4H575V149.6" stroke="#dedede" stroke-width="1.65" fill="none" /><rect x="560.4" y="152" width="23.2" height="23.4" fill="#1f3a22"/><g stroke="#8fd3a0" stroke-width="1.6" fill="none"><path d="M563.2 161.2A9.6 9.6 0 0 1 581 159.2"/><path d="M581.2 166.6A9.6 9.6 0 0 1 563.4 168.6"/><path d="M581.6 154.2V159.6H576.2"/><path d="M562.8 173.6V168.2H568.2"/></g><path d="M567.2 215.3L571.3 218.826L575.4 215.3" stroke="#ececec" stroke-width="2.0" fill="none" /><rect x="602.2" y="131" width="22" height="19.8" stroke="#dedede" stroke-width="1.65"/><path d="M602.2 134.6H624.2M616.8 134.6V150.8" stroke="#dedede" stroke-width="1.3" fill="none" /><path d="M619 138.3H622.4M619 141.6H622.4M619 144.9H622.4" stroke="#5ea0dc" stroke-width="1.2" fill="none" /><rect x="604.6" y="169" width="17" height="22.2" stroke="#7c7c7c" stroke-width="1.65"/><path d="M608.2 175.5H611.2V178.5H608.2ZM608.2 182.4H611.2V185.4H608.2ZM613.6 177H617.6M613.6 183.9H617.6" stroke="#7c7c7c" stroke-width="1.1" fill="none" /><path d="M610 230.70000000000002H604.6V208.3H613.8000000000001" stroke="#7c7c7c" stroke-width="1.65" fill="none" /><path d="M613.8000000000001 208.3V216.3H621.8000000000001Z" stroke="#7c7c7c" stroke-width="1.65" fill="#4a4a4a" /><path d="M612.5 226.5Q612.5 223 616 223H618.5M620 230.3H617.2Q613.6 230.3 613.4 227.2M617 226.6H621Q624.4 226.6 624.4 229.6" stroke="#7c7c7c" stroke-width="1.5" fill="none" /><rect x="891" y="158.8" width="40.4" height="21.8" rx="1.5" stroke="#e0e0e0" stroke-width="1.65"/><path d="M904 158.8V153.4H918.4V158.8" stroke="#e0e0e0" stroke-width="1.65" fill="none" /><path d="M891 169.2H908.6M913.8 169.2H931.4" stroke="#e0e0e0" stroke-width="1.3" fill="none" /><rect x="908.6" y="166.6" width="5.2" height="5.6" stroke="#e0e0e0" stroke-width="1.3"/><path d="M1008 161.4L1026.7 150.2L1045.4 161.4Z" stroke="#e0e0e0" stroke-width="1.65" fill="none" /><path d="M1011.4 162V179.4M1019 162V179.4M1026.7 162V179.4M1034.4 162V179.4M1042 162V179.4" stroke="#e0e0e0" stroke-width="1.4" fill="none" /><path d="M1009.5 180.2H1043.9" stroke="#e0e0e0" stroke-width="1.4" fill="none" /><path d="M1006.6 184H1046.8" stroke="#e0e0e0" stroke-width="1.8" fill="none" /><path d="M1093.6 151.6L1097.4 148L1101.2 151.6" stroke="#5a5a5a" stroke-width="1.9" fill="none" /><path d="M1093.4 177.8L1097.4 181.6L1101.4 177.8" stroke="#ececec" stroke-width="2.1" fill="none" /><path d="M1092.6 203.6H1102.2" stroke="#ececec" stroke-width="1.8" fill="none" /><path d="M1093.4 208.8L1097.4 212.6L1101.4 208.8" stroke="#ececec" stroke-width="2.1" fill="none" /><text x="1143.2" y="151.7" font-size="16.2" font-weight="700" fill="#4b93d6" stroke="none" font-family="Liberation Sans,sans-serif" textLength="8.8" lengthAdjust="spacingAndGlyphs" >A</text><text x="1143.4" y="164.9" font-size="14.6" font-weight="700" fill="#ededed" stroke="none" font-family="Liberation Sans,sans-serif" textLength="8.4" lengthAdjust="spacingAndGlyphs" >Z</text><path d="M1161.6 137.6V164M1156.2 158.9L1161.6 164.4L1167 158.9" stroke="#dedede" stroke-width="1.5" fill="none" /><text x="1143.4" y="199.1" font-size="14.6" font-weight="700" fill="#ededed" stroke="none" font-family="Liberation Sans,sans-serif" textLength="8.4" lengthAdjust="spacingAndGlyphs" >Z</text><text x="1143.2" y="213" font-size="16.2" font-weight="700" fill="#4b93d6" stroke="none" font-family="Liberation Sans,sans-serif" textLength="8.8" lengthAdjust="spacingAndGlyphs" >A</text><path d="M1161.6 185.6V212M1156.2 206.9L1161.6 212.4L1167 206.9" stroke="#dedede" stroke-width="1.5" fill="none" /><rect x="1187.2" y="137" width="18.4" height="34" fill="#14283b"/><rect x="1206" y="142" width="21.4" height="14" fill="#14283b"/><rect x="1187.2" y="130.8" width="40.4" height="5.6" fill="#5c5c5c"/><rect x="1187.2" y="130.8" width="40.4" height="40.4" stroke="#dedede" stroke-width="1.65"/><path d="M1187.2 136.6H1227.6M1205.8 136.6V171.2" stroke="#dedede" stroke-width="1.5" fill="none" /><text x="1191.8" y="152.6" font-size="17" font-weight="400" fill="#ededed" stroke="none" font-family="Liberation Sans,sans-serif" textLength="9.4" lengthAdjust="spacingAndGlyphs" >Z</text><text x="1191.4" y="168.6" font-size="17.6" font-weight="400" fill="#5b9bd6" stroke="none" font-family="Liberation Sans,sans-serif" textLength="10" lengthAdjust="spacingAndGlyphs" >A</text><text x="1210.4" y="152.6" font-size="17.6" font-weight="400" fill="#4a86c0" stroke="none" font-family="Liberation Sans,sans-serif" textLength="12.6" lengthAdjust="spacingAndGlyphs" >A</text><text x="1211" y="168.6" font-size="17" font-weight="400" fill="#ededed" stroke="none" font-family="Liberation Sans,sans-serif" textLength="12" lengthAdjust="spacingAndGlyphs" >Z</text><path d="M1267.8 130.6H1307.6V138.2L1292.2 153V171.4H1283V153L1267.8 138.2Z" stroke="#dedede" stroke-width="1.7" fill="none" /><path d="M1329 129.9H1351.2V133.1L1342.4 142.1V152.5H1337.6V142.1L1329 133.1Z" stroke="#7c7c7c" stroke-width="1.45" fill="none" /><rect x="1342.2" y="138" width="10.4" height="14.6" fill="#292929"/><path d="M1337.6 142V152.5" stroke="#7c7c7c" stroke-width="1.45" fill="none" /><path d="M1343.4 139.4L1351.6 150.8M1351.6 139.4L1343.4 150.8" stroke="#7c7c7c" stroke-width="1.5" fill="none" /><path d="M1329 168.9H1351.2V172.1L1342.4 181.1V191.5H1337.6V181.1L1329 172.1Z" stroke="#7c7c7c" stroke-width="1.45" fill="none" /><rect x="1342" y="176.6" width="11" height="15.6" fill="#292929"/><path d="M1337.6 181V191.5" stroke="#7c7c7c" stroke-width="1.45" fill="none" /><path d="M1350.8 181.4A5 5 0 1 0 1351.6 187.2M1351.8 178.4V181.8H1348.2" stroke="#7c7c7c" stroke-width="1.4" fill="none" /><path d="M1329 207.9H1351.2V211.1L1342.4 220.1V230.5H1337.6V220.1L1329 211.1Z" stroke="#dedede" stroke-width="1.45" fill="none" /><rect x="1337.4" y="216" width="14.4" height="15" fill="#15304a"/><path d="M1337.6 220V230.6H1340" stroke="#dedede" stroke-width="1.45" fill="none" /><g stroke="#5b9bd6" stroke-width="1.3"><circle cx="1344.8" cy="223.6" r="3.2"/><path d="M1344.8 218.2V220M1344.8 227.2V229M1339.4 223.6H1341.2M1348.4 223.6H1350.2M1341 219.8L1342.2 221M1347.4 226.2L1348.6 227.4M1348.6 219.8L1347.4 221M1342.2 226.2L1341 227.4"/></g><path d="M1494.4 137H1511.6M1494.4 142.8H1511.6M1499.6 148.6H1511.6" stroke="#dedede" stroke-width="1.7" fill="none" /><rect x="1518.4" y="130.2" width="14.6" height="41.6" stroke="#dedede" stroke-width="1.65"/><path d="M1518.4 144H1533M1518.4 158H1533" stroke="#dedede" stroke-width="1.4" fill="none" /><path d="M1522.6 137H1528.8M1522.6 151H1528.8M1522.6 165H1528.8" stroke="#9a9a9a" stroke-width="1.5" fill="none" /><path d="M1497.6 148.8C1489 149.6 1486.6 157.6 1491 162.4C1494.4 166 1500.6 166.6 1506.4 166.4M1502.2 161.4L1507.8 166.4L1502 171.6" stroke="#63a4d8" stroke-width="1.7" fill="none" /><rect x="1560.6" y="143.4" width="22.8" height="7.8" fill="#15304a"/><rect x="1570" y="130.4" width="13.4" height="13" fill="#15304a"/><path d="M1570 130.4H1583.4V151.2H1560.6V143.4H1583.4M1560.6 143.4V137M1568.2 143.4V151.2M1575.8 130.4V151.2M1570 136.8H1583.4" stroke="#b9dcf6" stroke-width="1.3" fill="none" /><path d="M1566.4 128.6L1560.8 137.2H1564.6L1561.6 143.2L1569.4 134.4H1565.4L1568.8 128.6Z" stroke="#f6c04a" stroke-width="0.6" fill="#f6c04a" /><rect x="1563.2" y="168.8" width="18" height="8.8" fill="#2a86d6"/><rect x="1563.2" y="183.6" width="10.6" height="7.8" fill="#2a86d6"/><path d="M1563.2 168.8H1581.2V182M1563.2 168.8V191.4H1573M1563.2 177.6H1581.2M1563.2 183.6H1576" stroke="#a9d4f8" stroke-width="1.3" fill="none" /><path d="M1565.8 173.2H1578.6" stroke="#cfe8ff" stroke-width="1.4" fill="none" /><path d="M1574.8 183.6L1583 191.6M1583 183.6L1574.8 191.6" stroke="#e0506c" stroke-width="1.7" fill="none" /><path d="M1568.6 211H1560.6V216.6H1568.6M1560.6 223.4H1568.6M1560.6 229.2H1568.6M1560.6 223.4V229.2" stroke="#dedede" stroke-width="1.5" fill="none" /><rect x="1569.6" y="207" width="14.4" height="10.6" fill="#173a26"/><path d="M1570.6 212.4L1575.4 216.6L1583.4 208.2" stroke="#8fd0a4" stroke-width="1.6" fill="none" /><circle cx="1576.8" cy="225.2" r="5.9" fill="#5a1020" stroke="#e0566e" stroke-width="1.6"/><path d="M1572.8 221.2L1580.8 229.2" stroke="#e0566e" stroke-width="1.6" fill="none" /><path d="M1728.8 218.6L1733.1999999999998 222.384L1737.6 218.6" stroke="#ececec" stroke-width="2.0" fill="none" /><path d="M1773.2 137.4H1763.6V130.8H1773.2V133M1773.2 143.2H1763.6V149.6H1773.2V147.4" stroke="#dedede" stroke-width="1.5" fill="none" /><path d="M1766 140.3H1773M1771 137.8L1773.8 140.3L1771 142.8" stroke="#6aa6dc" stroke-width="1.4" fill="none" /><rect x="1777.6" y="136.4" width="9.6" height="7.4" fill="#1a3a5a" stroke="#5b9bd6" stroke-width="1.4"/><path d="M1780 140.1H1784.8" stroke="#9cc8f0" stroke-width="1.2" fill="none" /><rect x="1763.6" y="174.4" width="8.8" height="9.2" stroke="#8c8c8c" stroke-width="1.4"/><rect x="1777" y="169" width="9.6" height="9" stroke="#8c8c8c" stroke-width="1.4"/><rect x="1777" y="182.6" width="9.6" height="9" stroke="#8c8c8c" stroke-width="1.4"/><path d="M1772.4 179H1774.8V173.4H1777M1774.8 179V187H1777M1766 177.6H1770M1766 180.4H1770M1779.6 172H1784M1779.6 175H1784M1779.6 185.6H1784M1779.6 188.6H1784" stroke="#8c8c8c" stroke-width="1.1" fill="none" /><rect x="1760.6" y="207.8" width="27" height="24" rx="2" fill="#2c5a12"/><path d="M1764.6 228V213.4L1772.6 209.4L1782 211.6" stroke="#8ccf4c" stroke-width="1.7" fill="none" /><path d="M1768.4 229.4V215.8L1775.4 212.4" stroke="#6fb43a" stroke-width="1.5" fill="none" /><path d="M1771.6 217.4L1779 213.6L1786.4 216.4V227.4L1779 231L1771.6 228.4Z" fill="#b4ec7c"/><path d="M1779 213.6V231M1771.6 221L1779 218.4L1786.4 220.2M1771.6 224.8L1779 222.6L1786.4 224M1775.2 215.6V229.8M1782.8 215V229.2" stroke="#3c7a18" stroke-width="1.1" fill="none" /><rect x="2015.4" y="134.6" width="14.2" height="32" fill="#1b74d6"/><rect x="2029.6" y="145.8" width="13.4" height="10" fill="#5a3a22" opacity=".7"/><rect x="2015.4" y="134.6" width="42" height="32" stroke="#dedede" stroke-width="1.65"/><path d="M2029.6 134.6V166.6M2043 134.6V166.6M2015.4 145.8H2057.4M2015.4 156H2057.4" stroke="#dedede" stroke-width="1.4" fill="none" /><path d="M2015.4 134.6H2029.6V166.6H2015.4ZM2015.4 145.8H2029.6M2015.4 156H2029.6" stroke="#86c6ff" stroke-width="1.5" fill="none" /><rect x="2044.6" y="149.6" width="17" height="25.4" fill="#292929"/><path d="M2048.4 156.4C2048.8 151.6 2058.2 151 2058.6 156.6C2058.8 160.6 2052.6 161.4 2052.8 167.4" stroke="#76aede" stroke-width="2" fill="none" /><circle cx="2052.8" cy="172.4" r="1.5" fill="#76aede"/><path d="M2064.6 211.3L2068.8999999999996 214.99799999999996L2073.2 211.3" stroke="#ececec" stroke-width="2.0" fill="none" /><path d="M2098.6 131.8H2139.6V162.4H2116C2112.6 162.4 2113.4 168.2 2108 168.2H2098.6Z" stroke="#dedede" stroke-width="1.6" fill="none" /><path d="M2098.6 142H2139.6M2098.6 152.2H2139.6M2098.6 162.4H2116M2112.2 131.8V162.4M2125.8 131.8V162.4" stroke="#bdbdbd" stroke-width="1.1" fill="none" /><path d="M2100 158L2104.4 150.4L2108.2 156L2112.4 151.2L2120 145.6" stroke="#5b9ccc" stroke-width="1.6" fill="none" /><path d="M2120 145.6L2125 143L2128.4 145.8L2136.4 136.6" stroke="#e0566e" stroke-width="1.7" fill="none" /><path d="M2131.4 135.6L2137.4 135.4L2137 141.6Z" stroke="#e0566e" stroke-width="1" fill="#e0566e" /><rect x="2186.4" y="136" width="8.8" height="8.8" fill="#173049" stroke="#dedede" stroke-width="1.4"/><path d="M2190.8 138.4V142.4M2188.8 140.4H2192.8" stroke="#7db8ee" stroke-width="1.1" fill="none" /><path d="M2193.4 130.8H2200.6M2193.4 149.4H2200.6" stroke="#dedede" stroke-width="1.3" fill="none" /><rect x="2200.6" y="130.6" width="8.8" height="19" stroke="#dedede" stroke-width="1.45"/><path d="M2200.6 137H2209.4M2200.6 143.2H2209.4" stroke="#dedede" stroke-width="1.2" fill="none" /><path d="M2284.8 139.4L2289.2 143.18399999999988L2293.6 139.4" stroke="#ececec" stroke-width="2.0" fill="none" /><rect x="2186" y="174.2" width="9.6" height="10.2" fill="#c8304e"/><path d="M2188.4 182L2193.2 176.6M2190 176.6H2193.2V179.8" stroke="#ffd0d8" stroke-width="1.1" fill="none" /><path d="M2193.4 170.2H2200.6M2193.4 188.6H2200.6" stroke="#dedede" stroke-width="1.3" fill="none" /><rect x="2200.6" y="170" width="8.8" height="19" stroke="#dedede" stroke-width="1.45"/><path d="M2200.6 176.4H2209.4M2200.6 182.6H2209.4" stroke="#dedede" stroke-width="1.2" fill="none" /><path d="M2305.4 178.8L2309.9 182.67000000000002L2314.4 178.8" stroke="#ececec" stroke-width="2.0" fill="none" /><rect x="2196.6" y="208.2" width="12.8" height="21.8" stroke="#dedede" stroke-width="1.45"/><path d="M2203 208.2V230M2196.6 213.6H2209.4M2196.6 219H2209.4M2196.6 224.4H2209.4" stroke="#dedede" stroke-width="1.2" fill="none" /><path d="M2192.6 208.4H2186.6V230H2192.6M2186.6 215.2H2192.6M2186.6 222.6H2192.6" stroke="#a8d0ee" stroke-width="1.3" fill="none" /><path d="M2189 212H2191M2189 219H2191M2189 226.4H2191" stroke="#a8d0ee" stroke-width="1.1" fill="none" /><path d="M2334.2 139.2H2341M2337.6 135.8V142.6M2343.8 134.2H2356.4M2343.8 138.8H2356.4M2343.8 143.4H2356.4M2349.4 148.2H2356.4" stroke="#a4a4a4" stroke-width="1.5" fill="none" /><path d="M2334.2 178.2H2341M2343.8 173.6H2356.4M2343.8 178.2H2356.4M2343.8 182.6H2356.4M2349.4 187H2356.4" stroke="#858585" stroke-width="1.5" fill="none" /><path d="M2357 257V249H2365.6" stroke="#dedede" stroke-width="1.5" fill="none" /><path d="M2360.4 252.4L2366.8 258.4M2366.8 253.4V258.4H2361.8" stroke="#dedede" stroke-width="1.5" fill="none" /><path d="M2454.2 243L2461.8 250.2L2469.4 243" stroke="#e8e8e8" stroke-width="1.9" fill="none" /></svg>
<svg style="left:0;top:1560px" width="2496" height="32" viewBox="0 1560 2496 32" fill="none" stroke-linecap="round" stroke-linejoin="round"><g stroke="#ececec" stroke-width="1.9"><circle cx="90.2" cy="1567.6" r="2.3"/><path d="M82.4 1570.4Q86 1573.4 90.2 1573.4Q94.4 1573.4 98 1570.4M90.2 1573.4V1578.6M90.2 1578.6Q87.6 1581.6 85 1585.4M90.2 1578.6L92 1581.4"/><path d="M92.6 1581.8L96.2 1585.2L103.4 1577.6" stroke-width="2"/></g><g stroke="#ececec" stroke-width="1.5"><rect x="2071.4" y="1566.2" width="17.8" height="17.6"/><path d="M2071.4 1572H2089.2M2071.4 1578H2089.2M2077.4 1566.2V1583.8M2083.4 1566.2V1583.8"/></g><g stroke="#ececec" stroke-width="1.5"><rect x="2131.4" y="1566.2" width="19.8" height="17.6"/><rect x="2135.4" y="1569.4" width="11.8" height="14.4" stroke-width="1.2"/><path d="M2137.4 1573H2145.2M2137.4 1576.2H2145.2M2137.4 1579.4H2145.2" stroke-width="1.1"/></g><g stroke="#ececec" stroke-width="1.5"><rect x="2191" y="1566.2" width="20.4" height="17.6"/><path d="M2196.6 1566.2V1575.6H2211.4M2203.6 1566.2V1575.6"/></g><path d="M2238.6 1575.4H2250.8" stroke="#cfcfcf" stroke-width="1.4"/><path d="M2259 1575.4H2407" stroke="#8a8a8a" stroke-width="1.4"/><rect x="2329.2" y="1567.4" width="7.6" height="16.6" rx="1" fill="#adadad"/><path d="M2414.4 1575.4H2426.8M2420.6 1569.2V1581.6" stroke="#cfcfcf" stroke-width="1.4"/></svg>
<svg style="left:0;top:1592px" width="2496" height="71" viewBox="0 1592 2496 71" fill="none" stroke-linecap="round" stroke-linejoin="round"><defs><radialGradient id="sun" cx=".42" cy=".38" r=".7"><stop offset="0" stop-color="#ffb52e"/><stop offset=".6" stop-color="#f98b1e"/><stop offset="1" stop-color="#e8631a"/></radialGradient><linearGradient id="win" x1="0" y1="0" x2="1" y2="1"><stop offset="0" stop-color="#8fe0ff"/><stop offset="1" stop-color="#1592e6"/></linearGradient><linearGradient id="tv" x1="0" y1="0" x2="0" y2="1"><stop offset="0" stop-color="#ffffff"/><stop offset="1" stop-color="#c9c9c9"/></linearGradient><linearGradient id="fold" x1="0" y1="0" x2="0" y2="1"><stop offset="0" stop-color="#ffd766"/><stop offset="1" stop-color="#f4b52c"/></linearGradient><linearGradient id="off" x1="0" y1="0" x2="1" y2="0"><stop offset="0" stop-color="#c8201a"/><stop offset="1" stop-color="#f25a1d"/></linearGradient><radialGradient id="ff" cx=".5" cy=".2" r=".9"><stop offset="0" stop-color="#fff36b"/><stop offset=".35" stop-color="#ff9a1f"/><stop offset=".7" stop-color="#ff3b4e"/><stop offset="1" stop-color="#b5249c"/></radialGradient><linearGradient id="cube" x1="0" y1="0" x2="1" y2="1"><stop offset="0" stop-color="#ffb49a"/><stop offset="1" stop-color="#e55a3c"/></linearGradient></defs><circle cx="48" cy="1628" r="16" fill="url(#sun)"/><rect x="529.6" y="1612.2" width="17.4" height="17.2" rx="1" fill="url(#win)"/><rect x="548.8" y="1612.2" width="17.4" height="17.2" rx="1" fill="url(#win)"/><rect x="529.6" y="1631.2" width="17.4" height="17.2" rx="1" fill="url(#win)"/><rect x="548.8" y="1631.2" width="17.4" height="17.2" rx="1" fill="url(#win)"/><circle cx="617.6" cy="1626" r="11.2" fill="#4b4b4b" stroke="#f4f4f4" stroke-width="3"/><path d="M609.4 1635L600 1644.6" stroke="#f4f4f4" stroke-width="3.6"/><rect x="662.4" y="1622.4" width="26" height="23.6" rx="2" fill="#6b6b6b"/><rect x="672.6" y="1612.4" width="26" height="24" rx="2" fill="url(#tv)"/><path d="M728.6 1616.4Q728.6 1614 731 1614H739.6L743.2 1617.6H762.4Q764.8 1617.6 764.8 1620V1644.6Q764.8 1647 762.4 1647H731Q728.6 1647 728.6 1644.6Z" fill="url(#fold)"/><path d="M728.6 1617H741L743.8 1619.6H728.6Z" fill="#e9a020"/><path d="M735.4 1647V1638.4Q735.4 1635.4 738.4 1635.4H755Q758 1635.4 758 1638.4V1647Z" fill="#1c7fd8"/><rect x="735.4" y="1640.6" width="22.6" height="6.4" fill="#1563b8"/><path d="M815.6 1610.2V1647.4L797.4 1640.4V1617.6Z" fill="#c4262e"/><path d="M797.4 1640.4L815.6 1647.4V1642.2L803 1638.6Z" fill="#e23a4a"/><path d="M805.6 1620.8L815.6 1618V1639.4L805.6 1636.8Z" fill="#1f2a24"/><path d="M815.6 1610.2L826.6 1613.4V1644L815.6 1647.4Z" fill="#f0621c"/><path d="M815.6 1610.2L826.6 1613.4V1620L815.6 1618Z" fill="#f7821e"/><path d="M877.8 1629.2L862.2 1620.2A18 18 0 0 1 893.4 1620.2Z" fill="#e33b2e"/><path d="M877.8 1629.2L893.4 1620.2A18 18 0 0 1 877.8 1647.2Z" fill="#fbc116"/><path d="M877.8 1629.2L877.8 1647.2A18 18 0 0 1 862.2 1620.2Z" fill="#2ca24a"/><path d="M862.2 1620.2A18 18 0 0 1 893.4 1620.2L885 1625H877.8Z" fill="#e33b2e"/><circle cx="877.8" cy="1629.2" r="8.6" fill="#fff"/><circle cx="877.8" cy="1629.2" r="6.6" fill="#2a7de1"/><rect x="873.6" y="1653.6" width="10" height="3.4" rx="1.7" fill="#9a9a9a"/><rect x="928.6" y="1609.6" width="31.4" height="37.6" fill="#101f28"/><text x="928.6" y="1642.6" font-family="Liberation Serif,serif" font-size="40" fill="#e9eef0" textLength="16" lengthAdjust="spacingAndGlyphs">R</text><text x="943.6" y="1642.6" font-family="Liberation Serif,serif" font-size="40" fill="#f08a1e" textLength="16" lengthAdjust="spacingAndGlyphs">L</text><rect x="992.4" y="1610.2" width="36" height="36.6" rx="5" fill="#f2f3f5"/><circle cx="1010" cy="1628.6" r="15.6" fill="#0f1a26"/><text x="1001.8" y="1639.4" font-family="Liberation Serif,serif" font-size="29" fill="#d5d9de" textLength="18" lengthAdjust="spacingAndGlyphs">R</text><circle cx="1085.6" cy="1619.6" r="4.6" fill="#7b83eb"/><path d="M1080.6 1626H1092.4Q1093.8 1626 1093.8 1627.4V1637Q1093.8 1641.6 1088.6 1641.6Q1084 1641.6 1080.6 1637Z" fill="#5f68d8"/><circle cx="1076" cy="1618.4" r="6.4" fill="#7b83eb"/><path d="M1066.4 1626H1085.4Q1086.8 1626 1086.8 1627.6V1638Q1086.8 1646.4 1077 1646.4Q1067.4 1646.4 1066.4 1638Z" fill="#7b83eb"/><rect x="1057.2" y="1618.6" width="19.6" height="19.6" rx="2" fill="#4b53bc"/><path d="M1062.2 1623.6H1071.8M1067 1623.6V1634" stroke="#fff" stroke-width="2.4" stroke-linecap="butt"/><circle cx="1142.4" cy="1628.6" r="17.6" fill="#fbfbfb"/><g stroke-width="4.9" stroke-linecap="round"><path d="M1138.6 1618.6V1625.4" stroke="#36c5f0"/><path d="M1131.6 1625.4H1138.6" stroke="#36c5f0"/><path d="M1146.2 1618.6V1625.4" stroke="#2eb67d"/><path d="M1146.2 1625.4H1153.2" stroke="#2eb67d"/><path d="M1146.2 1632V1638.8" stroke="#ecb22e"/><path d="M1146.2 1632H1153.2" stroke="#ecb22e"/><path d="M1138.6 1632V1638.8" stroke="#e01e5a"/><path d="M1131.6 1632H1138.6" stroke="#e01e5a"/></g><path d="M1212.2 1615.4L1224.6 1622V1640.6L1212.2 1647.4L1199.8 1640.6V1622Z" fill="url(#cube)"/><path d="M1212.2 1629.4L1224.6 1622V1640.6L1212.2 1647.4Z" fill="#e8644a"/><path d="M1212.2 1629.4L1199.8 1622V1640.6L1212.2 1647.4Z" fill="#f08668"/><path d="M1192.6 1617.4L1196.4 1613.4L1202 1616.6L1199.8 1622V1632.6L1193.4 1628.6Z" fill="#b4403e"/><rect x="1264.2" y="1611" width="28.4" height="35.6" rx="2" fill="#c352d9"/><rect x="1284.6" y="1611" width="8" height="9" fill="#d86ce8"/><rect x="1284.6" y="1620" width="8" height="9" fill="#b53fcc"/><rect x="1284.6" y="1629" width="8" height="9" fill="#9a2db4"/><rect x="1256.2" y="1618.6" width="19.4" height="19.4" rx="2" fill="#7a1fa4"/><path d="M1261.8 1633V1623.6L1270 1633V1623.6" stroke="#fff" stroke-width="2.3" stroke-linejoin="miter" stroke-linecap="butt"/><rect x="1329.6" y="1610.8" width="28" height="24" rx="2" fill="#1e8fe6"/><rect x="1343.6" y="1610.8" width="14" height="8" fill="#35b6f4"/><rect x="1329.6" y="1618.8" width="14" height="8" fill="#1a6fc9"/><rect x="1343.6" y="1618.8" width="14" height="8" fill="#1e8fe6"/><path d="M1329.6 1630L1343.6 1638.6L1357.6 1630V1644.6Q1357.6 1646.6 1355.6 1646.6H1331.6Q1329.6 1646.6 1329.6 1644.6Z" fill="#1490df"/><path d="M1329.6 1646L1357.6 1631V1644.6Q1357.6 1646.6 1355.6 1646.6H1331Z" fill="#28a8ea"/><rect x="1321.4" y="1618.8" width="19.4" height="19.4" rx="2" fill="#0f6cbd"/><ellipse cx="1331.1" cy="1628.5" rx="4.4" ry="5" stroke="#fff" stroke-width="2.3"/><rect x="1390.4" y="1612.4" width="31.2" height="29.2" fill="#0a2238" stroke="#cfe0f2" stroke-width="2"/><text x="1397.2" y="1634.2" font-family="Liberation Sans,sans-serif" font-size="23" fill="#e4eefa" textLength="19.4" lengthAdjust="spacingAndGlyphs">Lr</text><rect x="1457.2" y="1611.8" width="29.6" height="30.2" rx="5" fill="#0a1f33" stroke="#3fb2f0" stroke-width="2"/><text x="1462" y="1634.4" font-family="Liberation Sans,sans-serif" font-size="23" fill="#f2f8ff" textLength="19.8" lengthAdjust="spacingAndGlyphs">Ps</text><rect x="1520.4" y="1610.4" width="26.4" height="27" rx="2.4" fill="#f6f2f0"/><rect x="1530" y="1618.6" width="13" height="15" fill="#d7d2d0"/><path d="M1523.6 1615.8H1526.4M1523.6 1621H1526.4M1523.6 1626.2H1526.4M1523.6 1631.4H1526.4M1529.4 1614.2H1532.2M1534.8 1614.2H1537.6M1540.2 1614.2H1543" stroke="#e2502c" stroke-width="2.8" stroke-linecap="butt"/><path d="M1541.4 1637L1551 1629.6M1549 1633.6L1541.6 1640.4" stroke="#e9f4fa" stroke-width="1.6"/><circle cx="1552.4" cy="1628.8" r="3.2" stroke="#3aa3dc" stroke-width="2.2"/><circle cx="1539.8" cy="1643" r="3.2" stroke="#3aa3dc" stroke-width="2.2"/><rect x="1526.2" y="1653.8" width="26.2" height="3.6" rx="1.8" fill="#6cc3ee"/><path d="M1604.4 1609.6Q1612 1614 1614.6 1619.6Q1617 1616.6 1616.6 1613.6Q1623.6 1621.6 1621.6 1632Q1619 1646.8 1604.6 1646.8Q1590.4 1646.8 1587.6 1633.6Q1586.4 1625.6 1591 1619.8Q1591.4 1622.6 1593 1624Q1593.6 1618.6 1598 1616.2Q1597.4 1620 1600 1621.6Q1603 1616 1604.4 1609.6Z" fill="url(#ff)"/><circle cx="1605.6" cy="1630.6" r="8.6" fill="#6b4df0"/><path d="M1596.4 1632Q1596.6 1622.4 1605.6 1621.6Q1611.4 1621.4 1614 1625.4Q1608.4 1623.6 1605.6 1626.6Q1609.8 1627.6 1610.8 1631.2Q1606.4 1627.8 1601.8 1629.8Q1598.8 1631.2 1596.4 1632Z" fill="#ff8a2a"/><rect x="1599.6" y="1653.2" width="9.4" height="3.4" rx="1.7" fill="#9a9a9a"/><circle cx="1669.4" cy="1628.6" r="17.4" fill="#1ed760"/><path d="M1659.4 1622.6Q1670 1619.4 1680.2 1624.6" stroke="#0e2a18" stroke-width="3"/><path d="M1660.6 1629Q1669.6 1626.4 1678.6 1630.8" stroke="#0e2a18" stroke-width="2.5"/><path d="M1661.8 1635Q1669.4 1633 1676.8 1636.6" stroke="#0e2a18" stroke-width="2.1"/><rect x="1664.8" y="1653.2" width="9.4" height="3.4" rx="1.7" fill="#9a9a9a"/><rect x="1726" y="1611" width="28" height="35.6" rx="2" fill="#2b7cd3"/><rect x="1726" y="1611" width="28" height="9" fill="#41a5ee"/><rect x="1726" y="1629" width="28" height="9" fill="#185abd"/><rect x="1726" y="1638" width="28" height="8.6" fill="#103f91"/><rect x="1717.6" y="1618.6" width="19.4" height="19.4" rx="2" fill="#185abd"/><path d="M1721.6 1623.6L1724 1633L1727.3 1624.6L1730.6 1633L1733 1623.6" stroke="#fff" stroke-width="2.1" stroke-linejoin="miter" stroke-linecap="butt"/><rect x="1730.8" y="1653.2" width="9.4" height="3.4" rx="1.7" fill="#9a9a9a"/><rect x="1791.6" y="1611" width="28.4" height="35.6" rx="2" fill="#21a366"/><rect x="1805.8" y="1611" width="14.2" height="9" fill="#33c481"/><rect x="1791.6" y="1611" width="14.2" height="9" fill="#21a366"/><rect x="1791.6" y="1620" width="14.2" height="9" fill="#107c41"/><rect x="1791.6" y="1629" width="28.4" height="9" fill="#107c41"/><rect x="1805.8" y="1620" width="14.2" height="9" fill="#21a366"/><rect x="1791.6" y="1638" width="28.4" height="8.6" fill="#185c37"/><rect x="1783.4" y="1618.6" width="19.4" height="19.4" rx="2" fill="#107c41"/><path d="M1788.6 1623.4L1797.6 1633.4M1797.6 1623.4L1788.6 1633.4" stroke="#fff" stroke-width="2.5" stroke-linecap="butt"/><rect x="1796.6" y="1653.2" width="9.4" height="3.4" rx="1.7" fill="#9a9a9a"/><path d="M1868.6 1632.2L1878.2 1622.8L1887.8 1632.2" stroke="#f0e6e4" stroke-width="1.7"/><circle cx="1933.4" cy="1621.6" r="3" fill="#7b83eb"/><circle cx="1927" cy="1620.4" r="4" fill="#8a90ec"/><path d="M1920.6 1625.4H1937.6V1632Q1937.6 1638 1930 1638Q1921.6 1638 1920.6 1632Z" fill="#6a72dc"/><rect x="1913.8" y="1620.6" width="13" height="13" rx="1.5" fill="#4b53bc"/><path d="M1917 1624H1923.6M1920.3 1624V1631" stroke="#fff" stroke-width="1.6" stroke-linecap="butt"/><circle cx="1934.6" cy="1634.6" r="4" fill="#2a2a2e" stroke="#c8c8d0" stroke-width="1.5"/><g stroke-width="3" stroke-linecap="round"><path d="M1970.6 1619.6V1624" stroke="#dfe8ee"/><path d="M1963.6 1626.4H1968.6" stroke="#dfe8ee"/><path d="M1976 1619.6V1624.4" stroke="#dfe8ee"/><path d="M1970.6 1631V1636" stroke="#dfe8ee"/><path d="M1964.4 1631.4H1966" stroke="#dfe8ee"/></g><circle cx="1978.6" cy="1631.6" r="6.4" fill="#2fb5e8"/><path d="M2014.8 1636.4Q2009.8 1636.4 2009.8 1631.8000000000002Q2009.8 1627.4 2014.3999999999999 1627.0Q2016.2 1620.6000000000001 2022.2 1620.8000000000002Q2026.3999999999999 1621.0 2028.2 1624.8000000000002Q2033.8 1625.4 2033.8 1631.0Q2033.8 1636.4 2028.8 1636.4Z" fill="#1f8fe6"/><path d="M2063 1636.4Q2058 1636.4 2058 1631.8000000000002Q2058 1627.4 2062.6 1627.0Q2064.4 1620.6000000000001 2070.4 1620.8000000000002Q2074.6 1621.0 2076.4 1624.8000000000002Q2082 1625.4 2082 1631.0Q2082 1636.4 2077 1636.4Z" fill="#e9e9e9"/><path d="M2062 1636.4Q2070 1630.4 2082 1632.4V1636.4Z" fill="#c4c4c4"/><g stroke="#f2f2f2" stroke-width="1.7"><path d="M2108 1626.4A10.4 10.4 0 0 1 2127 1621.4M2127.6 1616.4V1622H2122"/><path d="M2120 1639.6A10.4 10.4 0 0 1 2108.6 1634M2108 1639.4V1633.8H2113.6"/></g><circle cx="2124.4" cy="1634" r="5.8" fill="#1f7fe0"/><g stroke="#f4f4f4" stroke-width="2.3"><path d="M2220.8 1625.4A15.4 15.4 0 0 1 2242.8 1625.4"/><path d="M2224.6 1629.4A10 10 0 0 1 2239 1629.4"/><path d="M2228.2 1633.2A5 5 0 0 1 2235.4 1633.2"/></g><circle cx="2231.8" cy="1636" r="1.7" fill="#f4f4f4"/><path d="M2256.6 1624.4H2261L2266.6 1619.4V1636.6L2261 1631.6H2256.6Z" stroke="#f4f4f4" stroke-width="1.9"/><path d="M2270.4 1623.6Q2273.6 1628 2270.4 1632.4" stroke="#f4f4f4" stroke-width="1.6"/><path d="M2274.6 1620.4Q2280 1628 2274.6 1635.6" stroke="#6e6e6e" stroke-width="1.6"/><rect x="2292.6" y="1621.4" width="20.6" height="14" rx="3" stroke="#f4f4f4" stroke-width="1.7"/><rect x="2295.4" y="1624.2" width="11" height="8.4" rx="1.2" fill="#f4f4f4"/><path d="M2315.8 1626V1630.8" stroke="#f4f4f4" stroke-width="2.2"/><circle cx="2454.6" cy="1627.6" r="12" fill="#56b9ec"/><text x="2451" y="1633.6" font-family="Liberation Sans,sans-serif" font-size="16.5" fill="#12222c">1</text></svg>
<span style="left:190.0px;top:28.3px;font-size:15.2px;color:#5c5c5c;letter-spacing:0.35px;">Off</span>
<svg style="left:530px;top:44px" width="146" height="116" viewBox="530 44 146 116"><path d="M601.4 58.2C607.3 58.3 614.3 59.4 619.3 60.7C624.3 62.0 627.4 64.0 631.2 66.2C635.0 68.5 638.9 71.5 641.9 74.2C644.9 77.0 646.9 79.7 649.0 82.7C651.1 85.7 653.0 89.5 654.4 92.4C655.8 95.3 656.9 97.6 657.6 100.0C658.3 102.4 658.7 104.9 658.5 107.0C658.3 109.1 657.6 110.6 656.5 112.5C655.4 114.4 654.0 115.6 652.0 118.2C650.0 120.8 647.3 125.0 644.3 128.1C641.3 131.2 637.9 134.5 634.2 137.0C630.5 139.5 626.3 141.5 622.3 143.0C618.3 144.5 614.4 145.4 610.4 146.0C606.4 146.6 602.5 146.8 598.5 146.6C594.5 146.4 590.6 145.8 586.6 144.8C582.6 143.8 578.7 142.4 574.7 140.6C570.7 138.8 566.3 136.6 562.8 134.1C559.3 131.6 556.2 128.9 553.8 125.7C551.4 122.5 549.9 118.2 548.5 114.8C547.1 111.3 545.8 107.6 545.2 105.0C544.6 102.4 544.5 101.3 544.9 99.0C545.3 96.7 546.5 94.1 547.9 91.2C549.3 88.3 551.1 84.7 553.3 81.7C555.5 78.7 557.9 76.0 561.0 73.2C564.1 70.5 567.9 67.4 571.7 65.2C575.5 63.0 578.7 61.4 583.6 60.2C588.5 59.0 595.5 58.1 601.4 58.2Z" fill="none" stroke="#ea2c16" stroke-width="5.7"/></svg>
</div></body></html>
